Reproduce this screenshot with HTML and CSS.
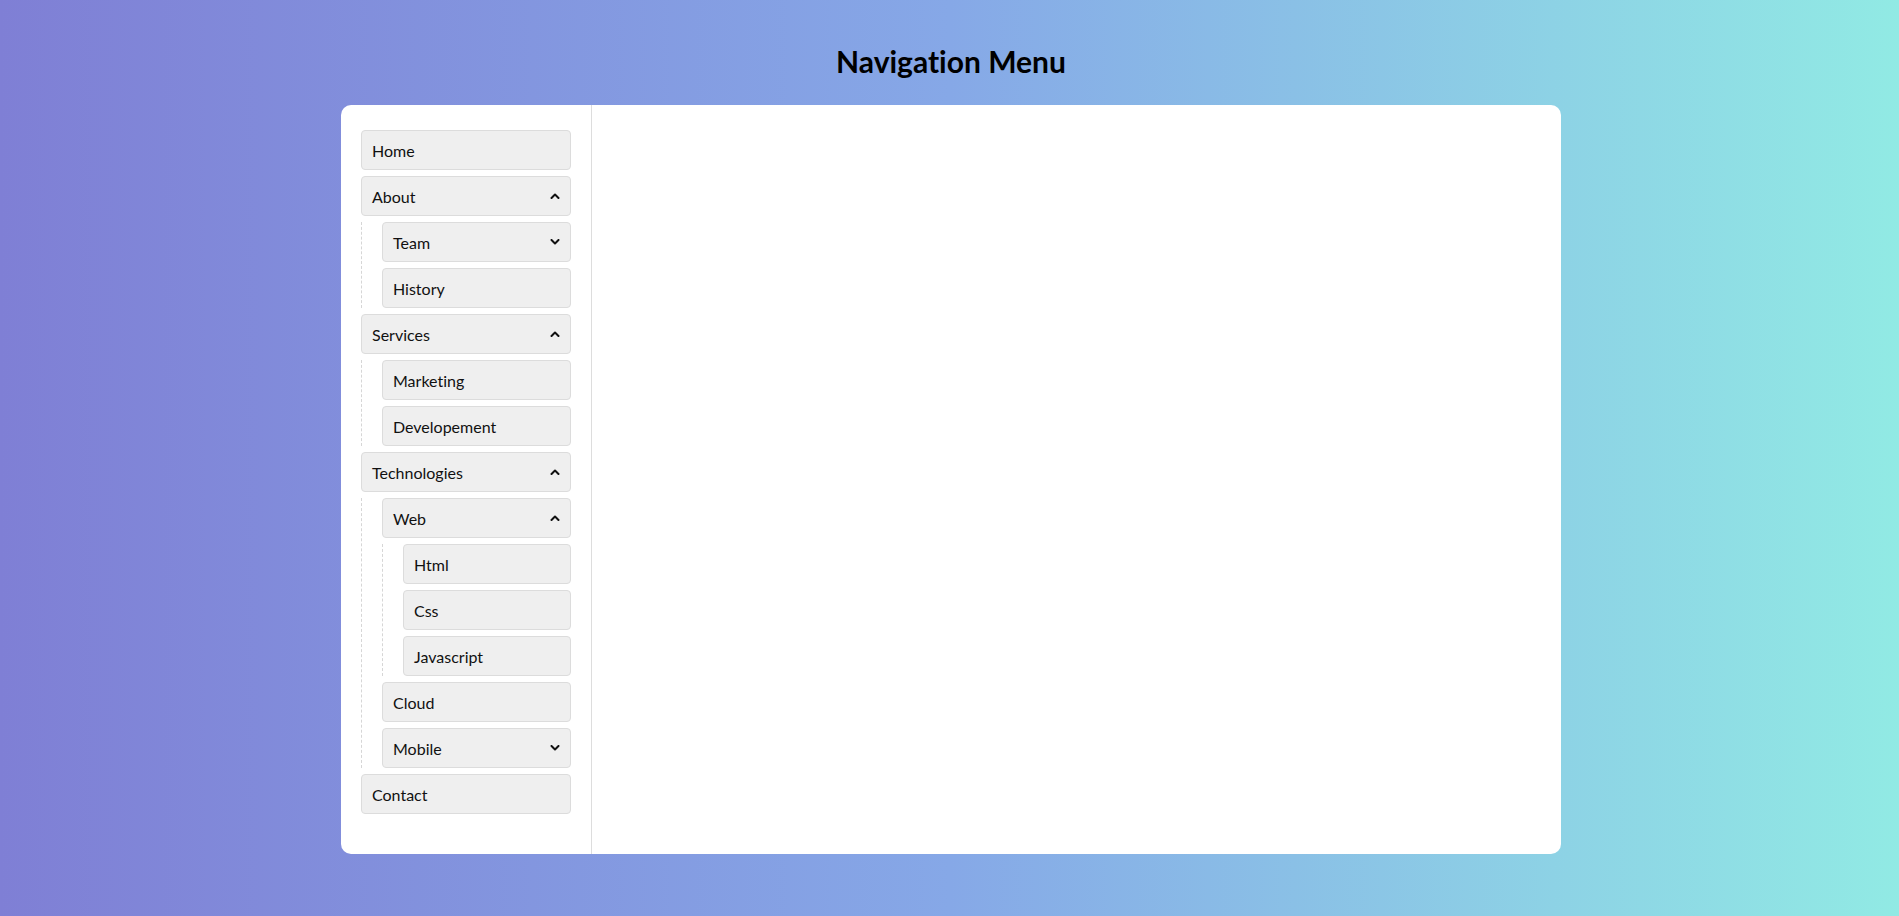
FILE: index.html
```html
<!DOCTYPE html>
<html lang="en">
<head>
<meta charset="utf-8">
<title>Navigation Menu</title>
<link rel="stylesheet" href="styles.css">
</head>
<body>
<div class="page">
  <h1 class="title">Navigation Menu</h1>
  <div class="card">
    <nav class="sidebar">
      <ul class="menu">
        <li><div class="item"><span>Home</span></div></li>
        <li>
          <div class="item"><span>About</span><svg class="chev" viewBox="0 0 10 6"><polyline points="1.5,5 5,1.5 8.5,5"/></svg></div>
          <ul class="menu sub">
            <li><div class="item"><span>Team</span><svg class="chev" viewBox="0 0 10 6"><polyline points="1.5,1 5,4.5 8.5,1"/></svg></div></li>
            <li><div class="item"><span>History</span></div></li>
          </ul>
        </li>
        <li>
          <div class="item"><span>Services</span><svg class="chev" viewBox="0 0 10 6"><polyline points="1.5,5 5,1.5 8.5,5"/></svg></div>
          <ul class="menu sub">
            <li><div class="item"><span>Marketing</span></div></li>
            <li><div class="item"><span>Developement</span></div></li>
          </ul>
        </li>
        <li>
          <div class="item"><span>Technologies</span><svg class="chev" viewBox="0 0 10 6"><polyline points="1.5,5 5,1.5 8.5,5"/></svg></div>
          <ul class="menu sub">
            <li>
              <div class="item"><span>Web</span><svg class="chev" viewBox="0 0 10 6"><polyline points="1.5,5 5,1.5 8.5,5"/></svg></div>
              <ul class="menu sub">
                <li><div class="item"><span>Html</span></div></li>
                <li><div class="item"><span>Css</span></div></li>
                <li><div class="item"><span>Javascript</span></div></li>
              </ul>
            </li>
            <li><div class="item"><span>Cloud</span></div></li>
            <li><div class="item"><span>Mobile</span><svg class="chev" viewBox="0 0 10 6"><polyline points="1.5,1 5,4.5 8.5,1"/></svg></div></li>
          </ul>
        </li>
        <li><div class="item"><span>Contact</span></div></li>
      </ul>
    </nav>
    <main class="content"></main>
  </div>
</div>
</body>
</html>
```
FILE: styles.css
```css
* { box-sizing: border-box; }
html, body { margin: 0; padding: 0; height: 100%; }
body {
  font-family: Lato, "Open Sans", "Liberation Sans", sans-serif;
  font-variant-ligatures: none;
  background: linear-gradient(to right, #7f7fd5, #86a8e7, #91eae4);
  color: #111;
}
.page {
  padding-top: 43px;
  padding-left: 3px;
  display: flex;
  flex-direction: column;
  align-items: center;
}
.title {
  margin: 0 0 26px;
  font-size: 30px;
  font-weight: 700;
  line-height: 36px;
  color: #000;
}
.card {
  width: 1220px;
  height: 749px;
  background: #fff;
  border-radius: 10px;
  display: flex;
  overflow: hidden;
}
.sidebar {
  width: 251px;
  flex: none;
  padding: 25px 20px;
  border-right: 1px solid #ddd;
}
.content { flex: 1; }
.menu {
  list-style: none;
  margin: 0;
  padding: 0;
  display: flex;
  flex-direction: column;
  gap: 6px;
}
.sub {
  margin-top: 6px;
  padding-left: 20px;
  border-left: 1px dashed #d6d6d6;
}
.item {
  height: 40px;
  display: flex;
  align-items: center;
  justify-content: space-between;
  padding: 1px 10px 0;
  background: #efefef;
  border: 1px solid #dcdcdc;
  border-radius: 4px;
  font-size: 16px;
  color: #111;
}
.chev {
  width: 10px;
  height: 6px;
  margin-top: -1px;
  fill: none;
  stroke: #111;
  stroke-width: 2;
  stroke-linecap: round;
  stroke-linejoin: round;
}
```
